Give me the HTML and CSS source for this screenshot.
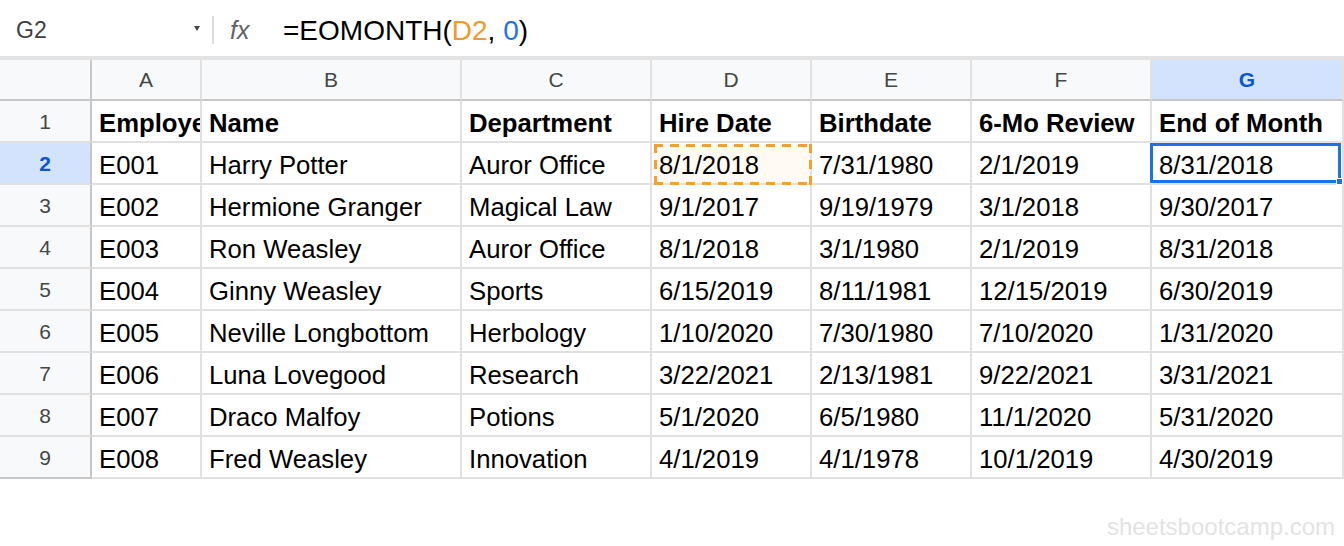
FILE: index.html
```html
<!DOCTYPE html>
<html>
<head>
<meta charset="utf-8">
<link rel="stylesheet" href="styles.css">
</head>
<body>
<div class="formula-bar">
  <div class="namebox"><span class="ref">G2</span><span class="caret"></span></div>
  <div class="sep"></div>
  <div class="fx">fx</div>
  <div class="formula">=EOMONTH(<span class="f-ref">D2</span>, <span class="f-num">0</span>)</div>
</div>
<div class="grid">
  <div class="corner"></div>
  <div class="colhead">A</div>
  <div class="colhead">B</div>
  <div class="colhead">C</div>
  <div class="colhead">D</div>
  <div class="colhead">E</div>
  <div class="colhead">F</div>
  <div class="colhead active">G</div>

  <div class="rowhead">1</div>
  <div class="cell b">Employee ID</div>
  <div class="cell b">Name</div>
  <div class="cell b">Department</div>
  <div class="cell b">Hire Date</div>
  <div class="cell b">Birthdate</div>
  <div class="cell b">6-Mo Review</div>
  <div class="cell b">End of Month</div>

  <div class="rowhead active">2</div>
  <div class="cell">E001</div>
  <div class="cell">Harry Potter</div>
  <div class="cell">Auror Office</div>
  <div class="cell copied">8/1/2018</div>
  <div class="cell">7/31/1980</div>
  <div class="cell">2/1/2019</div>
  <div class="cell selected">8/31/2018</div>

  <div class="rowhead">3</div>
  <div class="cell">E002</div>
  <div class="cell">Hermione Granger</div>
  <div class="cell">Magical Law</div>
  <div class="cell">9/1/2017</div>
  <div class="cell">9/19/1979</div>
  <div class="cell">3/1/2018</div>
  <div class="cell">9/30/2017</div>

  <div class="rowhead">4</div>
  <div class="cell">E003</div>
  <div class="cell">Ron Weasley</div>
  <div class="cell">Auror Office</div>
  <div class="cell">8/1/2018</div>
  <div class="cell">3/1/1980</div>
  <div class="cell">2/1/2019</div>
  <div class="cell">8/31/2018</div>

  <div class="rowhead">5</div>
  <div class="cell">E004</div>
  <div class="cell">Ginny Weasley</div>
  <div class="cell">Sports</div>
  <div class="cell">6/15/2019</div>
  <div class="cell">8/11/1981</div>
  <div class="cell">12/15/2019</div>
  <div class="cell">6/30/2019</div>

  <div class="rowhead">6</div>
  <div class="cell">E005</div>
  <div class="cell">Neville Longbottom</div>
  <div class="cell">Herbology</div>
  <div class="cell">1/10/2020</div>
  <div class="cell">7/30/1980</div>
  <div class="cell">7/10/2020</div>
  <div class="cell">1/31/2020</div>

  <div class="rowhead">7</div>
  <div class="cell">E006</div>
  <div class="cell">Luna Lovegood</div>
  <div class="cell">Research</div>
  <div class="cell">3/22/2021</div>
  <div class="cell">2/13/1981</div>
  <div class="cell">9/22/2021</div>
  <div class="cell">3/31/2021</div>

  <div class="rowhead">8</div>
  <div class="cell">E007</div>
  <div class="cell">Draco Malfoy</div>
  <div class="cell">Potions</div>
  <div class="cell">5/1/2020</div>
  <div class="cell">6/5/1980</div>
  <div class="cell">11/1/2020</div>
  <div class="cell">5/31/2020</div>

  <div class="rowhead last">9</div>
  <div class="cell">E008</div>
  <div class="cell">Fred Weasley</div>
  <div class="cell">Innovation</div>
  <div class="cell">4/1/2019</div>
  <div class="cell">4/1/1978</div>
  <div class="cell">10/1/2019</div>
  <div class="cell">4/30/2019</div>
</div>
<div class="watermark">sheetsbootcamp.com</div>
</body>
</html>
```
FILE: styles.css
```css
html, body {
  margin: 0;
  padding: 0;
  background: #ffffff;
  font-family: "Liberation Sans", Arial, sans-serif;
  overflow: hidden;
}
body {
  width: 1344px;
  height: 546px;
  position: relative;
}

.formula-bar {
  border-bottom: 4px solid #e3e3e3;
  display: flex;
  align-items: center;
  padding-top: 5px;
  box-sizing: border-box;
  height: 60px;
}
.namebox {
  width: 200px;
  padding-left: 16px;
  display: flex;
  align-items: center;
  justify-content: space-between;
  box-sizing: border-box;
}
.ref {
  font-size: 23px;
  color: #3c4043;
}
.caret {
  width: 0;
  height: 0;
  border-left: 3.5px solid transparent;
  border-right: 3.5px solid transparent;
  border-top: 5px solid #444746;
  margin-top: -4px;
}
.sep {
  width: 2px;
  height: 28px;
  background: #dadce0;
  margin-left: 12px;
  margin-top: -2px;
}
.fx {
  margin-left: 16px;
  width: 53px;
  font-size: 25px;
  font-style: italic;
  color: #5f6368;
  margin-top: -1px;
}
.formula {
  font-size: 28px;
  color: #000;
}
.f-ref { color: #f4982a; }
.f-num { color: #1a73e8; }

.grid {
  display: grid;
  grid-template-columns: 92px 110px 260px 190px 160px 160px 180px 1fr;
  grid-template-rows: 41px;
  grid-auto-rows: 42px;
}
.corner, .colhead, .rowhead, .cell {
  box-sizing: border-box;
  border-right: 2px solid #e1e1e1;
  border-bottom: 2px solid #e1e1e1;
  overflow: hidden;
  white-space: nowrap;
}
.corner {
  background: #f8f9fa;
  border-right-color: #c7c7c7;
  border-bottom-color: #c7c7c7;
}
.colhead {
  background: #f8f9fa;
  border-bottom-color: #c7c7c7;
  display: flex;
  align-items: center;
  justify-content: center;
  font-size: 21px;
  color: #444746;
  padding-top: 1px;
}
.colhead.active {
  background: #d3e3fd;
  color: #0b57d0;
  font-weight: bold;
}
.rowhead {
  background: #f8f9fa;
  border-right-color: #c7c7c7;
  display: flex;
  align-items: center;
  justify-content: center;
  font-size: 21px;
  color: #444746;
  padding-top: 2px;
}
.rowhead.active {
  background: #d3e3fd;
  color: #0b57d0;
  font-weight: bold;
}
.rowhead.last {
  border-bottom-color: #c7c7c7;
}
.cell {
  display: flex;
  align-items: center;
  padding-left: 7px;
  padding-top: 4px;
  font-size: 25.7px;
  color: #000;
  background: #fff;
}
.cell.b {
  font-weight: bold;
}
.cell.copied {
  position: relative;
  overflow: visible;
  background: #fffaf4;
}
.cell.copied::after {
  content: "";
  position: absolute;
  left: 2px;
  top: 1px;
  right: -2px;
  bottom: -2px;
  background:
    repeating-linear-gradient(90deg, #f6a033 0 9px, transparent 9px 16px) top left / 100% 3px no-repeat,
    repeating-linear-gradient(90deg, #f6a033 0 9px, transparent 9px 16px) bottom left / 100% 3px no-repeat,
    repeating-linear-gradient(180deg, #f6a033 0 9px, transparent 9px 16px) top left / 3px 100% no-repeat,
    repeating-linear-gradient(180deg, #f6a033 0 9px, transparent 9px 16px) top right / 3px 100% no-repeat;
}
.cell.selected {
  position: relative;
  overflow: visible;
}
.cell.selected::after {
  content: "";
  position: absolute;
  left: -2px;
  top: 0;
  right: 1px;
  bottom: 0;
  border: 3px solid #1a73e8;
}
.cell.selected::before {
  content: "";
  position: absolute;
  right: -1px;
  bottom: -2px;
  width: 5px;
  height: 5px;
  background: #1a73e8;
  border: 1px solid #fff;
  z-index: 2;
}
.watermark {
  position: absolute;
  right: 9px;
  top: 513px;
  font-size: 24px;
  color: #e3e3e3;
}
```
